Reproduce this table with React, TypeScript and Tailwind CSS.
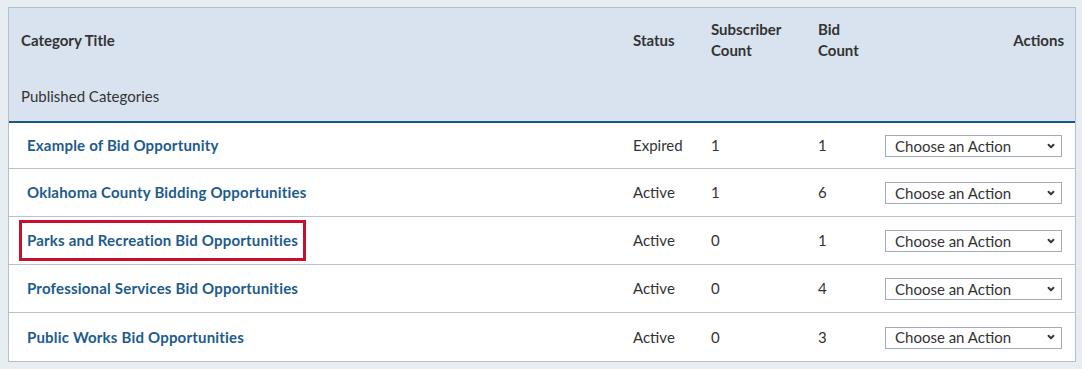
import { ChevronDown } from 'lucide-react';

type Category = {
  title: string;
  status: string;
  subscribers: number;
  bids: number;
  highlighted?: boolean;
};

const categories: Category[] = [
  { title: 'Example of Bid Opportunity', status: 'Expired', subscribers: 1, bids: 1 },
  { title: 'Oklahoma County Bidding Opportunities', status: 'Active', subscribers: 1, bids: 6 },
  { title: 'Parks and Recreation Bid Opportunities', status: 'Active', subscribers: 0, bids: 1, highlighted: true },
  { title: 'Professional Services Bid Opportunities', status: 'Active', subscribers: 0, bids: 4 },
  { title: 'Public Works Bid Opportunities', status: 'Active', subscribers: 0, bids: 3 },
];

const cols = 'grid grid-cols-[611px_78px_107px_67px_203px]';

function ActionSelect() {
  return (
    <div className="relative w-[177px] h-[22px]">
      <select
        defaultValue=""
        className="appearance-none w-full h-full pl-[9px] pr-6 bg-white border border-[#a3acb6] text-[15px] leading-none text-[#333] focus:outline-none"
      >
        <option value="">Choose an Action</option>
        <option value="edit">Edit</option>
        <option value="delete">Delete</option>
      </select>
      <ChevronDown
        className="absolute right-[6px] top-[6px] w-[10px] h-[10px] text-[#333] pointer-events-none"
        strokeWidth={4.5}
      />
    </div>
  );
}

export default function App() {
  return (
    <div
      className="w-[1082px] h-[369px] bg-[#e8edf2] pt-[7px] pl-2"
      style={{ fontFamily: 'Lato, "Open Sans", sans-serif' }}
    >
      <div className="w-[1068px] border border-[#b3bfcd] bg-white">
        <div className="bg-[#d9e3ef] border-b-2 border-[#165a8c] text-[15px] text-[#333]">
          <div className={`${cols} h-[64px] items-center font-bold leading-[21px]`}>
            <div className="pl-3">Category Title</div>
            <div className="pl-[13px]">Status</div>
            <div className="pl-[13px]">
              Subscriber
              <br />
              Count
            </div>
            <div className="pl-[13px]">
              Bid
              <br />
              Count
            </div>
            <div className="pr-[11px] text-right">Actions</div>
          </div>
          <div className="h-[49px] flex items-center pl-3">Published Categories</div>
        </div>

        {categories.map((c, i) => (
          <div
            key={c.title}
            className={`${cols} items-center text-[15px] text-[#333] ${
              i < categories.length - 1 ? 'border-b border-[#b8c3d0]' : ''
            } ${i === 0 ? 'h-[46px]' : 'h-[48px]'}`}
          >
            <div className="pl-[10px]">
              <a
                href="#"
                className={`inline-flex items-center h-[41px] px-[5px] border-[3px] font-bold tracking-[0.2px] text-[#1c5b8c] ${
                  c.highlighted ? 'border-[#c8102e]' : 'border-transparent'
                }`}
              >
                {c.title}
              </a>
            </div>
            <div className="pl-[13px]">{c.status}</div>
            <div className="pl-[13px]">{c.subscribers}</div>
            <div className="pl-[13px]">{c.bids}</div>
            <div className="pl-[13px]">
              <ActionSelect />
            </div>
          </div>
        ))}
      </div>
    </div>
  );
}
